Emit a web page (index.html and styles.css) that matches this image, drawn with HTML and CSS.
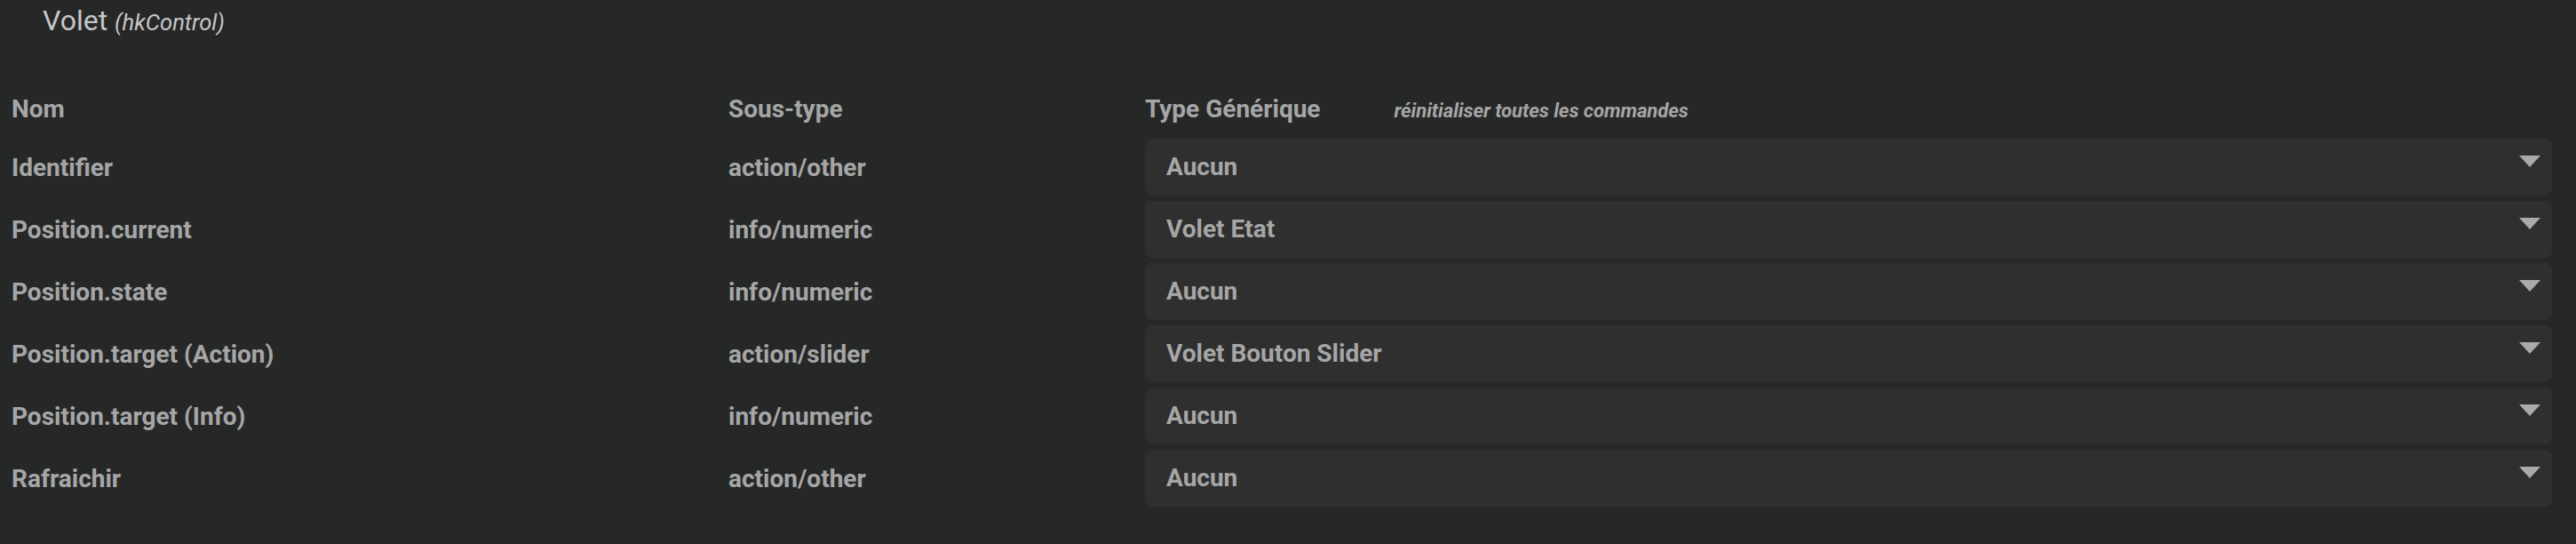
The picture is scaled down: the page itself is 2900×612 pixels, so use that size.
FILE: index.html
```html
<!DOCTYPE html>
<html lang="fr">
<head>
    <meta charset="UTF-8">
    <title>Volet</title>
    <link rel="stylesheet" href="styles.css">
</head>
<body>
    <div class="titre">Volet <i>(hkControl)</i></div>

    <!-- Liste des commandes -->
    <div class="commandes">
        <div class="entete">Nom</div>
        <div class="entete">Sous-type</div>
        <div class="entete">Type Générique <i class="reset">réinitialiser toutes les commandes</i></div>

        <div class="nom">Identifier</div>
        <div class="soustype">action/other</div>
        <div class="choix">Aucun</div>

        <div class="nom">Position.current</div>
        <div class="soustype">info/numeric</div>
        <div class="choix">Volet Etat</div>

        <div class="nom">Position.state</div>
        <div class="soustype">info/numeric</div>
        <div class="choix">Aucun</div>

        <div class="nom">Position.target (Action)</div>
        <div class="soustype">action/slider</div>
        <div class="choix">Volet Bouton Slider</div>

        <div class="nom">Position.target (Info)</div>
        <div class="soustype">info/numeric</div>
        <div class="choix">Aucun</div>

        <div class="nom">Rafraichir</div>
        <div class="soustype">action/other</div>
        <div class="choix">Aucun</div>
    </div>
</body>
</html>
```

FILE: styles.css
```css
body {
    margin: 0;
    padding: 0 27px 0 13px;
    background-color: #262828;
    color: #a6a6a6;
    font-family: Roboto, "Liberation Sans", sans-serif;
    height: 612px;
    overflow: hidden;
}

.titre {
    margin-top: 4px;
    padding-left: 35px;
    font-size: 32px;
    line-height: 38px;
    color: #c6c6c6;
}

.titre i {
    font-size: 25.6px;
}

.commandes {
    margin-top: 62px;
    display: grid;
    grid-template-columns: 807px 469px 1fr;
    grid-template-rows: 44px;
    grid-auto-rows: 64px;
    row-gap: 6px;
    align-items: center;
    font-size: 28px;
    font-weight: bold;
}

.entete {
    align-self: start;
}

.reset {
    margin-left: 76px;
    font-size: 22px;
}

.choix {
    position: relative;
    height: 64px;
    line-height: 64px;
    padding-left: 24px;
    background-color: #2f2f2f;
    border-radius: 8px;
}

.choix::after {
    content: "";
    position: absolute;
    right: 13px;
    top: 19px;
    border-left: 12px solid transparent;
    border-right: 12px solid transparent;
    border-top: 13px solid #aaaaaa;
}
```
